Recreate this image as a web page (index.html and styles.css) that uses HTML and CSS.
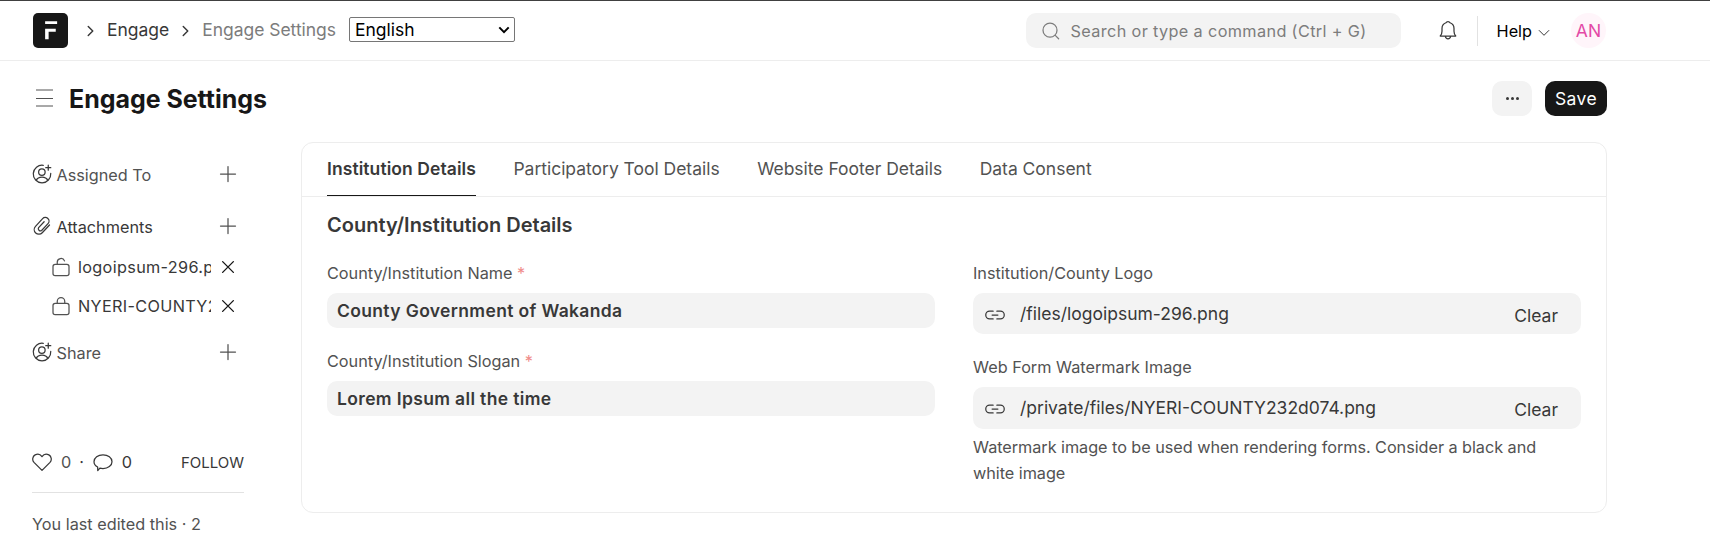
FILE: index.html
```html
<!DOCTYPE html>
<html lang="en">
<head>
<meta charset="utf-8">
<title>Engage Settings</title>
<link rel="stylesheet" href="styles.css">
</head>
<body>
<svg class="defs" width="0" height="0">
  <symbol id="i-assign" viewBox="0 0 16 16"><path d="M15 7.500A7 7 0 1 1 9 1.070M3.300 13.100c.8-1.700 2.600-2.600 4.700-2.600s3.900.9 4.700 2.600M13 .9v4M11 2.900h4"/><circle cx="7.900" cy="6.400" r="2.600"/></symbol>
  <symbol id="i-plus" viewBox="0 0 16 16"><path d="M8 2v12M2 8h12"/></symbol>
  <symbol id="i-x" viewBox="0 0 16 16"><path d="M3.700 3.700l8.600 8.600M12.300 3.700l-8.600 8.600"/></symbol>
  <symbol id="i-link" viewBox="0 0 16 16"><path d="M6.500 4.900H3.700a3.100 3.100 0 0 0 0 6.200h2.800M9.500 4.900h2.800a3.100 3.100 0 0 1 0 6.200H9.500M5.700 8h4.600"/></symbol>
  <symbol id="i-chev" viewBox="0 0 8 12"><path d="M2 2l4 4-4 4"/></symbol>
</svg>
<header class="navbar">
  <svg class="logo" viewBox="0 0 28 28"><rect width="28" height="28" rx="4"/><path d="M9.700 6.500h9.600v2.300H9.700zM9.700 12.500h8.500v2.400h-5.700v6H9.700z" class="mark"/></svg>
  <nav class="crumbs">
    <svg class="icon crumb-sep"><use href="#i-chev"/></svg><a class="crumb">Engage</a>
    <svg class="icon crumb-sep second"><use href="#i-chev"/></svg><span class="crumb muted">Engage Settings</span>
  </nav>
  <div class="lang-wrap"><select class="lang"><option>English</option></select><svg class="icon lang-arrow" viewBox="0 0 12 8"><path d="M1.300 1.400L6 6.100l4.700-4.700"/></svg></div>
  <div class="search">
    <svg class="icon s20" viewBox="0 0 16 16"><circle cx="7.200" cy="7.300" r="5.600"/><path d="M11.400 11.500l2.700 2.700"/></svg>
    <span>Search or type a command (Ctrl + G)</span>
  </div>
  <svg class="icon bell" viewBox="0 0 16 16"><path d="M1.800 12.400c1-1.100 1.400-2.200 1.400-3.800V6.300a4.800 4.800 0 0 1 3.200-4.500c.3-.7.900-1 1.600-1s1.300.3 1.600 1a4.800 4.800 0 0 1 3.200 4.500v2.300c0 1.600.4 2.700 1.400 3.800zM5.900 12.600c.2 1.400 1 2.100 2.100 2.100s1.900-.7 2.100-2.100"/></svg>
  <span class="vline"></span>
  <span class="help">Help</span>
  <svg class="icon help-chev" viewBox="0 0 12 8"><path d="M1.200 1.500L6 6.300l4.800-4.800"/></svg>
  <span class="avatar">AN</span>
</header>
<div class="page-head">
  <svg class="icon burger" viewBox="0 0 17 18"><path d="M0 1h17M0 9.500h17M0 17h17"/></svg>
  <h1>Engage Settings</h1>
  <button class="btn more"><i></i><i></i><i></i></button>
  <button class="btn save">Save</button>
</div>
<main class="layout">
  <aside class="sidebar">
    <div class="side-row"><svg class="icon s20 dark"><use href="#i-assign"/></svg><span>Assigned To</span><svg class="icon s20 end"><use href="#i-plus"/></svg></div>
    <div class="side-row attach"><svg class="icon s20 dark" viewBox="0 0 16 16"><path d="M14 7.200l-5.800 6.200a3.700 3.700 0 0 1-5.400-5.100L8.500 2.100a2.900 2.900 0 0 1 4.200-.1 2.900 2.900 0 0 1 .1 4.100l-5.100 5.500a1.700 1.700 0 0 1-2.400-2.300l4.400-4.700"/></svg><span>Attachments</span><svg class="icon s20 end"><use href="#i-plus"/></svg></div>
    <div class="file-row"><svg class="icon s20" viewBox="0 0 16 16"><rect x="1.600" y="5.800" width="12.800" height="9" rx="1.700"/><path d="M5 5.800V4.100a3 3 0 0 1 5.800-1"/></svg><span>logoipsum-296.png</span><svg class="icon s20 end"><use href="#i-x"/></svg></div>
    <div class="file-row"><svg class="icon s20" viewBox="0 0 16 16"><rect x="1.600" y="5.800" width="12.800" height="9" rx="1.700"/><path d="M5 5.800V4.300a3 3 0 0 1 6 0v1.500"/></svg><span>NYERI-COUNTY232d074.png</span><svg class="icon s20 end"><use href="#i-x"/></svg></div>
    <div class="side-row share"><svg class="icon s20 dark"><use href="#i-assign"/></svg><span>Share</span><svg class="icon s20 end"><use href="#i-plus"/></svg></div>
    <div class="stats">
      <svg class="icon s20 dark" viewBox="0 0 16 16"><path d="M8 14.700L1.600 8.300C-.1 6.400.4 3.500 2.500 2.300 4.400 1.300 6.700 1.800 8 3.700c1.300-1.900 3.600-2.400 5.500-1.400 2.100 1.200 2.600 4.100.9 6z"/></svg>
      <span class="likes">0</span><span class="dot">·</span>
      <svg class="icon s20 dark" viewBox="0 0 16 16"><path d="M8 2.200c4 0 7.200 2.400 7.200 5.500S12 13.200 8 13.200c-.9 0-1.700-.1-2.500-.3L3.800 14.900l-.1-2.900C1.900 11 .8 9.500.8 7.700.8 4.600 4 2.200 8 2.200z"/></svg>
      <span class="comments">0</span><span class="follow">FOLLOW</span>
    </div>
    <p class="edited">You last edited this · 2</p>
  </aside>
  <section class="card">
    <div class="tabs"><a class="tab active">Institution Details</a><a class="tab">Participatory Tool Details</a><a class="tab">Website Footer Details</a><a class="tab">Data Consent</a></div>
    <div class="card-body">
      <h2>County/Institution Details</h2>
      <div class="cols">
        <div class="col">
          <label>County/Institution Name <b>*</b></label>
          <div class="field">County Government of Wakanda</div>
          <label>County/Institution Slogan <b>*</b></label>
          <div class="field">Lorem Ipsum all the time</div>
        </div>
        <div class="col">
          <label>Institution/County Logo</label>
          <div class="field file"><svg class="icon s20"><use href="#i-link"/></svg><span>/files/logoipsum-296.png</span><span class="clear">Clear</span></div>
          <label>Web Form Watermark Image</label>
          <div class="field file tall"><svg class="icon s20"><use href="#i-link"/></svg><span>/private/files/NYERI-COUNTY232d074.png</span><span class="clear">Clear</span></div>
          <p class="hint">Watermark image to be used when rendering forms. Consider a black and white image</p>
        </div>
      </div>
    </div>
  </section>
</main>
</body>
</html>
```
FILE: styles.css
```css
* { box-sizing: border-box; }
body { margin: 0; height: 539px; overflow: hidden; background: #fff; color: #383838; font-family: Inter, "Liberation Sans", sans-serif; font-size: 16.25px; font-weight: 420; }
h1, h2, p { margin: 0; }
.defs { display: none; }
.icon { display: block; flex: none; fill: none; stroke: #525252; stroke-width: 1; stroke-linecap: round; stroke-linejoin: round; }
.s20 { width: 20px; height: 20px; }
.dark { stroke: #383838; }
.navbar { display: flex; align-items: center; height: 61px; padding: 0 104px 0 33px; border-top: 1px solid #404040; border-bottom: 1px solid #ededed; font-size: 17.5px; }
.logo { width: 35px; height: 35px; fill: #171717; }
.mark { fill: #fff; }
.crumbs { display: flex; align-items: center; margin-left: 18px; }
.crumb-sep { width: 9px; height: 14px; margin-right: 12px; stroke: #383838; stroke-width: 1.300; }
.crumb-sep.second { margin-left: 12px; }
.crumb { height: 24px; margin-bottom: 2px; letter-spacing: -0.03px; line-height: 24px; }
.crumb.muted { color: #7c7c7c; }
.lang-wrap { position: relative; margin: 0 0 2px 13px; }
.lang { display: block; width: 166px; height: 25px; padding: 0 0 0 5px; border: 1px solid #767676; border-radius: 2px; background: #fff; color: #000; font: 400 17.5px/23px Inter, sans-serif; appearance: none; }
.lang-arrow { position: absolute; top: 9px; right: 5px; width: 12px; height: 8px; stroke: #000; stroke-width: 2; stroke-linecap: butt; stroke-linejoin: miter; }
.search { display: flex; align-items: center; gap: 10px; width: 375px; height: 35px; margin-left: auto; padding-left: 15px; border-radius: 10px; background: #f3f3f3; color: #7c7c7c; font-size: 16.25px; letter-spacing: 0.022em; }
.search .icon { stroke: #7c7c7c; }
.bell { width: 20px; height: 21px; margin-left: 37px; stroke: #383838; }
.vline { width: 1px; height: 30px; margin-left: 19px; background: #e2e2e2; }
.help { margin-left: 19px; color: #000; font-size: 16.25px; }
.help-chev { width: 12px; height: 8px; margin: 4px 0 0 6px; stroke: #383838; }
.avatar { width: 35px; height: 35px; margin-left: 21px; border-radius: 50%; background: #fff5fa; color: #e34aa6; line-height: 35px; text-align: center; }
.page-head { display: flex; align-items: center; height: 74px; padding: 0 103px 0 36px; }
.burger { width: 17px; height: 18px; stroke-linecap: butt; stroke: #525252; }
h1 { margin: 2px 0 0 16px; color: #171717; font-size: 25px; font-weight: 700; letter-spacing: -0.04px; }
.btn { display: flex; align-items: center; justify-content: center; height: 35px; padding: 0; border: 0; border-radius: 10px; font: 420 17.5px Inter, sans-serif; letter-spacing: 0.02em; }
.more { width: 40px; gap: 2px; margin-left: auto; background: #f3f3f3; }
.more i { width: 3px; height: 3px; border-radius: 50%; background: #383838; }
.save { width: 62px; margin-left: 13px; background: #171717; color: #fff; }
.layout { display: flex; padding: 7px 103px 0 32px; }
.sidebar { width: 212px; margin-right: 57px; padding-top: 19px; }
.side-row, .file-row { display: flex; align-items: center; height: 26px; }
.side-row { gap: 4.5px; color: #525252; }
.side-row > span { padding-top: 2px; }
.end { margin-left: auto; margin-right: 6px; }
.attach { margin-top: 26px; color: #383838; }
.file-row { gap: 7px; height: 39px; padding-left: 19px; letter-spacing: 0.02em; }
.attach + .file-row { margin-top: 8px; }
.file-row > span { width: 134px; overflow: hidden; white-space: nowrap; }
.file-row .end { stroke: #171717; stroke-width: 1.100; }
.share { margin-top: 14px; }
.stats { display: flex; align-items: center; height: 61px; margin-top: 67px; border-bottom: 1px solid #e2e2e2; }
.likes { margin-left: 9px; color: #525252; }
.dot { width: 5px; margin: 0 9px 0 8px; }
.comments { margin-left: 8.5px; }
.follow { margin-left: auto; font-size: 15px; }
.edited { margin-top: 21px; color: #525252; line-height: 20px; }
.card { width: 1306px; height: 371px; border: 1px solid #ededed; border-radius: 12px; }
.tabs { display: flex; gap: 37.5px; height: 54px; padding: 0 25px; border-bottom: 1px solid #ededed; font-size: 17.5px; }
.tab { height: 53px; color: #525252; letter-spacing: -0.02px; line-height: 51px; }
.tab.active { border-bottom: 1px solid #171717; color: #383838; font-weight: 600; letter-spacing: 0.08px; }
.card-body { padding: 15px 25px 0; }
h2 { height: 26px; font-size: 20px; font-weight: 600; line-height: 26px; }
.cols { display: grid; grid-template-columns: 1fr 1fr; gap: 38px; margin-top: 25px; }
label { display: block; height: 20px; margin-bottom: 10px; color: #525252; line-height: 20px; }
label b { color: #f08c8a; font-weight: 420; }
.field { display: flex; align-items: center; height: 35px; margin-bottom: 23px; padding-left: 10px; border-radius: 10px; background: #f3f3f3; font-size: 17.5px; font-weight: 600; letter-spacing: 0.02em; }
.file { height: 41px; padding: 0 23px 0 12px; font-weight: 420; letter-spacing: 0; }
.file > span { margin-left: 15px; }
.file .icon { margin-top: 3px; stroke: #383838; }
.file .clear { margin: 3px 0 0 auto; }
.tall { height: 42px; margin-bottom: 5px; padding-bottom: 1px; }
.hint { color: #525252; letter-spacing: -0.05px; line-height: 26px; }
```
